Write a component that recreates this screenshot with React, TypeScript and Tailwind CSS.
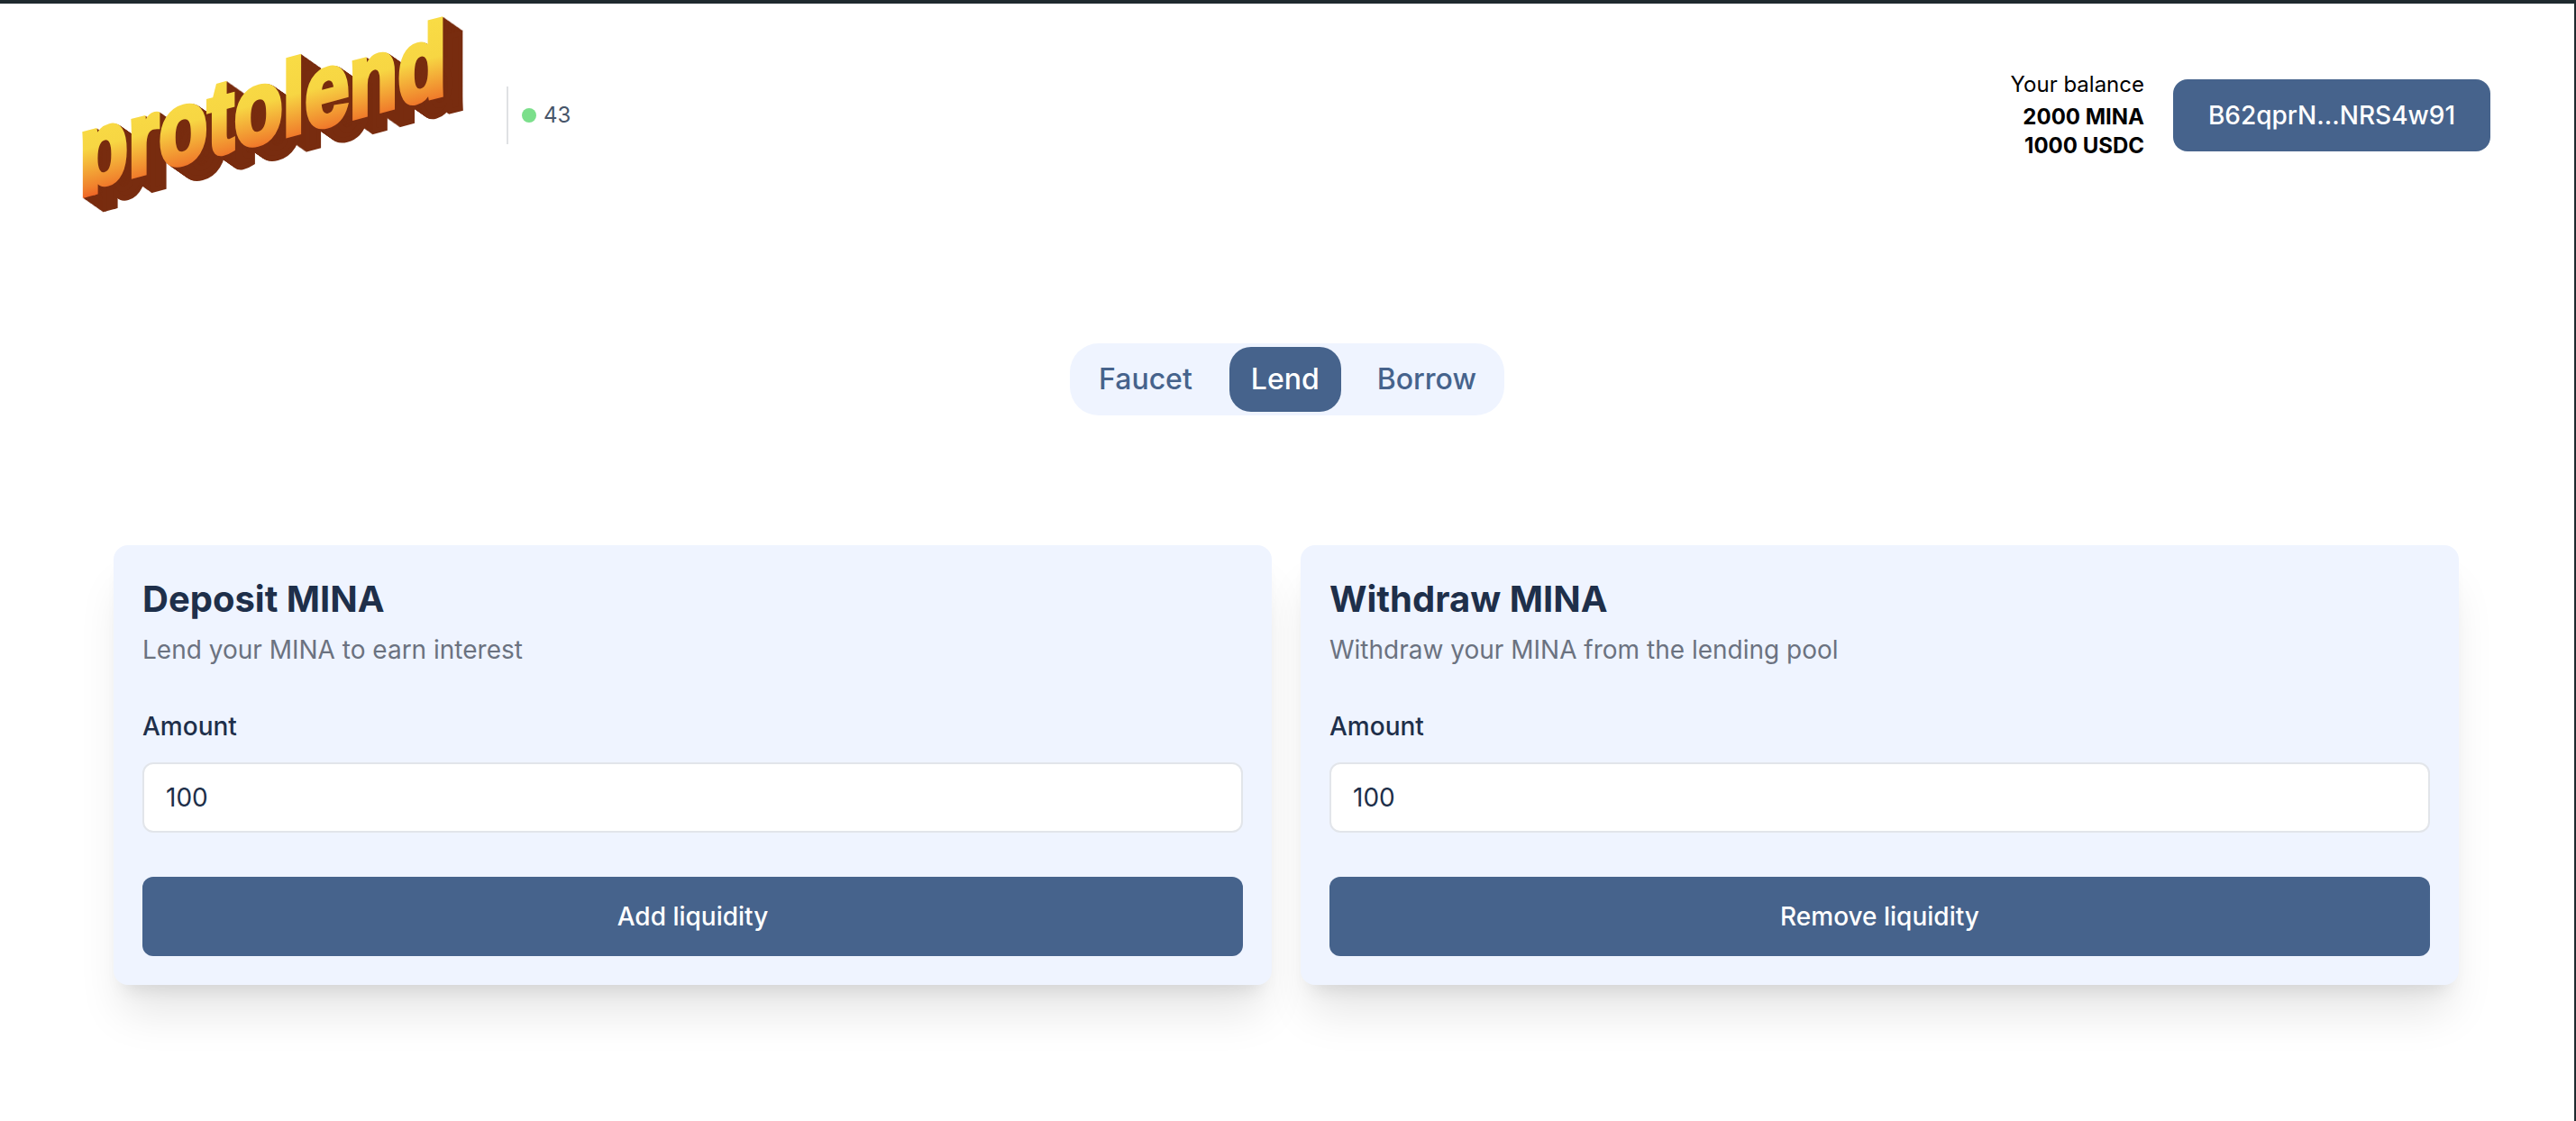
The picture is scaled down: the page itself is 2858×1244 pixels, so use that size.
const depth = Array.from({ length: 22 }, (_, i) => i + 1);
const logoMatrix = "translate(-2 191) skewY(-14.8) scale(0.768 1)";

function Logo() {
  const letters = {
    fontFamily: "'Liberation Sans', Arial, sans-serif",
    fontWeight: 700,
    fontSize: 115,
    strokeWidth: 6,
    strokeLinejoin: "miter" as const,
    strokeMiterlimit: 2,
  };
  return (
    <svg width="438" height="216" viewBox="0 0 438 216" className="block shrink-0 overflow-visible">
      <defs>
        <linearGradient id="logoFill" gradientUnits="userSpaceOnUse" x1="0" y1="-85" x2="0" y2="14">
          <stop offset="0" stopColor="#f9dc45" />
          <stop offset="0.42" stopColor="#f7d643" />
          <stop offset="0.86" stopColor="#f0802c" />
          <stop offset="1" stopColor="#ee5a22" />
        </linearGradient>
        {/* the logo face has a short p descender */}
        <clipPath id="logoClip">
          <rect x="-20" y="-130" width="700" height="140" />
        </clipPath>
      </defs>
      {depth.map((d) => (
        <g key={d} transform={`translate(${d} ${d * 0.7})`} aria-hidden="true">
          <g transform={logoMatrix} clipPath="url(#logoClip)">
            <text {...letters} fill="#782c0f" stroke="#782c0f">
              protolend
            </text>
          </g>
        </g>
      ))}
      <g transform={logoMatrix} clipPath="url(#logoClip)">
        <text {...letters} fill="url(#logoFill)" stroke="url(#logoFill)">
          protolend
        </text>
      </g>
    </svg>
  );
}

function ActionCard({
  title,
  text,
  action,
}: {
  title: string;
  text: string;
  action: string;
}) {
  return (
    <div className="bg-[#eff4ff] rounded-2xl p-8 shadow-[0_40px_50px_-10px_rgba(0,0,0,0.1),0_16px_20px_-12px_rgba(0,0,0,0.1)]">
      <h2 className="text-[40px] leading-[56px] font-bold text-[#1e2f4a]">{title}</h2>
      <p className="mt-[8px] text-[28px] leading-[40px] text-[#6b7280]">{text}</p>
      <label className="block mt-[45px] text-[28px] leading-[40px] font-medium text-[#1e2f4a]">
        Amount
      </label>
      <input
        defaultValue="100"
        className="block mt-[20px] w-full h-[78px] px-[24px] rounded-xl border-2 border-[#e2e5ea] bg-white text-[28px] text-[#1e2f4a] outline-none"
      />
      <button className="block mt-[49px] w-full h-[88px] rounded-xl bg-[#46638c] text-white text-[28px] font-medium">
        {action}
      </button>
    </div>
  );
}

export default function App() {
  return (
    <div className="h-[1244px] overflow-hidden bg-white border-t-4 border-r-2 border-[#1f2a2e] font-['Inter',sans-serif]">
      <header className="flex items-center justify-between pl-[90px] pr-[93px] pt-4">
        <div className="flex items-center">
          <Logo />
          <div className="ml-[34px] w-[2px] h-[64px] bg-[#dfe1e4]" />
          <div className="ml-[15px] w-4 h-4 rounded-full bg-[#7bdf8b]" />
          <span className="ml-[8px] text-[24px] text-[#475569]">43</span>
        </div>
        <div className="flex items-center gap-8">
          <div className="text-right text-[24px] leading-[32px] text-black">
            <p className="mb-[4px]">Your balance</p>
            <p className="font-bold">2000 MINA</p>
            <p className="font-bold">1000 USDC</p>
          </div>
          <button className="w-[352px] h-[80px] rounded-2xl bg-[#46638c] text-white text-[28px] font-medium">
            B62qprN...NRS4w91
          </button>
        </div>
      </header>
      <nav className="mt-[145px] flex justify-center">
        <div className="flex items-center h-[80px] px-[4px] rounded-[32px] bg-[#eff4ff] text-[32px] font-medium text-[#46638c]">
          <span className="pl-[28px] pr-[41px]">Faucet</span>
          <span className="flex items-center h-[72px] px-[24px] rounded-3xl bg-[#46638c] text-white">Lend</span>
          <span className="pl-[40px] pr-[27px]">Borrow</span>
        </div>
      </nav>
      <main className="mt-[144px] grid grid-cols-2 gap-8 pl-[126px] pr-[128px]">
        <ActionCard title="Deposit MINA" text="Lend your MINA to earn interest" action="Add liquidity" />
        <ActionCard title="Withdraw MINA" text="Withdraw your MINA from the lending pool" action="Remove liquidity" />
      </main>
    </div>
  );
}
